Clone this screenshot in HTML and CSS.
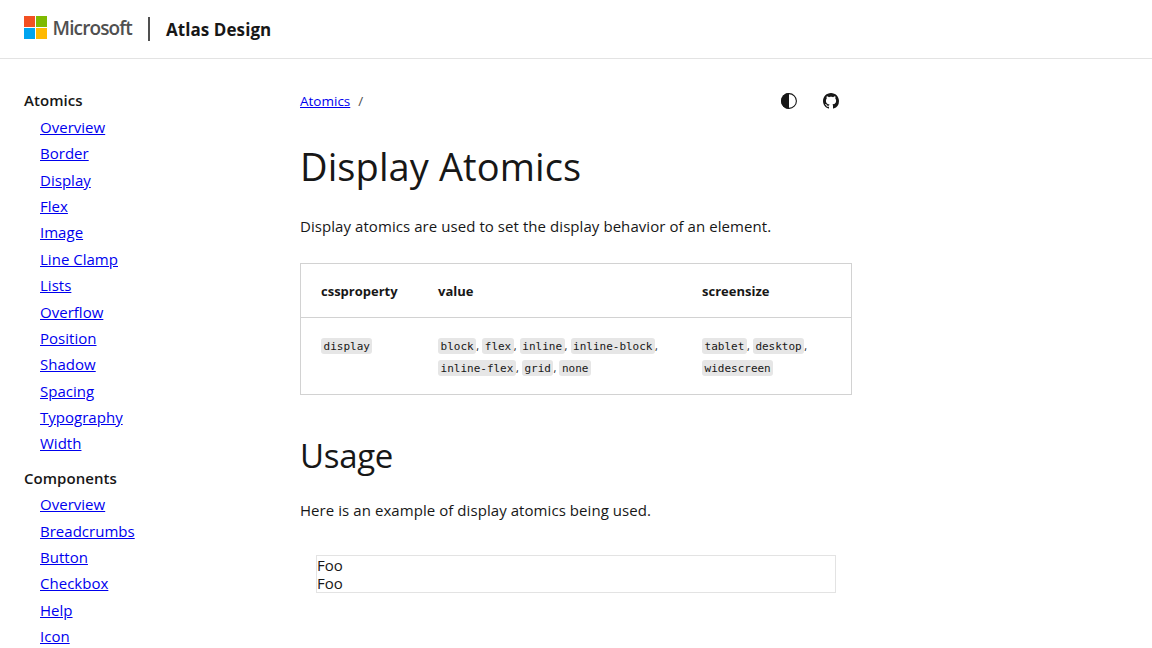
FILE: index.html
```html
<!DOCTYPE html>
<html lang="en">
<head>
<meta charset="utf-8">
<title>Display Atomics - Atlas Design</title>
<link rel="stylesheet" href="styles.css">
</head>
<body>
<header class="header">
  <a class="brand">
    <svg class="brand-mark" viewBox="0 0 23 23" width="23" height="23" aria-hidden="true"><path fill="#f25022" d="M0 0h11v11H0z"/><path fill="#7fba00" d="M12 0h11v11H12z"/><path fill="#00a4ef" d="M0 12h11v11H0z"/><path fill="#ffb900" d="M12 12h11v11H12z"/></svg>
    <span class="brand-name">Microsoft</span>
  </a>
  <span class="divider"></span>
  <span class="site-name">Atlas Design</span>
</header>
<div class="layout">
  <nav class="sidebar">
    <h2 class="nav-title">Atomics</h2>
    <ul class="nav-list">
      <li><a href="#">Overview</a></li>
      <li><a href="#">Border</a></li>
      <li><a href="#">Display</a></li>
      <li><a href="#">Flex</a></li>
      <li><a href="#">Image</a></li>
      <li><a href="#">Line Clamp</a></li>
      <li><a href="#">Lists</a></li>
      <li><a href="#">Overflow</a></li>
      <li><a href="#">Position</a></li>
      <li><a href="#">Shadow</a></li>
      <li><a href="#">Spacing</a></li>
      <li><a href="#">Typography</a></li>
      <li><a href="#">Width</a></li>
    </ul>
    <h2 class="nav-title">Components</h2>
    <ul class="nav-list">
      <li><a href="#">Overview</a></li>
      <li><a href="#">Breadcrumbs</a></li>
      <li><a href="#">Button</a></li>
      <li><a href="#">Checkbox</a></li>
      <li><a href="#">Help</a></li>
      <li><a href="#">Icon</a></li>
    </ul>
  </nav>
  <main class="content">
    <div class="toolbar">
      <div class="breadcrumbs"><a href="#">Atomics</a><span class="slash">/</span></div>
      <div class="actions">
        <svg viewBox="0 0 16 16" width="16" height="16"><circle cx="8" cy="8" r="7.4" fill="none" stroke="#171717" stroke-width="1.1"/><path fill="#171717" d="M8 0a8 8 0 0 0 0 16z"/></svg>
        <svg viewBox="0 0 16 16" width="16" height="16"><path fill="#171717" d="M8 0C3.58 0 0 3.58 0 8c0 3.54 2.29 6.53 5.47 7.59.4.07.55-.17.55-.38 0-.19-.01-.82-.01-1.49-2.01.37-2.53-.49-2.69-.94-.09-.23-.48-.94-.82-1.13-.28-.15-.68-.52-.01-.53.63-.01 1.08.58 1.23.82.72 1.21 1.87.87 2.33.66.07-.52.28-.87.51-1.07-1.78-.2-3.64-.89-3.64-3.95 0-.87.31-1.59.82-2.15-.08-.2-.36-1.02.08-2.12 0 0 .67-.21 2.2.82.64-.18 1.32-.27 2-.27s1.36.09 2 .27c1.53-1.04 2.2-.82 2.2-.82.44 1.1.16 1.92.08 2.12.51.56.82 1.27.82 2.15 0 3.07-1.87 3.75-3.65 3.95.29.25.54.73.54 1.48 0 1.07-.01 1.93-.01 2.2 0 .21.15.46.55.38A8.01 8.01 0 0 0 16 8c0-4.42-3.58-8-8-8z"/></svg>
      </div>
    </div>
    <h1 class="title">Display Atomics</h1>
    <p class="text intro">Display atomics are used to set the display behavior of an element.</p>
    <table class="table">
      <colgroup><col class="col-property"><col class="col-value"><col class="col-screen"></colgroup>
      <thead><tr><th>cssproperty</th><th>value</th><th>screensize</th></tr></thead>
      <tbody><tr>
        <td><code>display</code></td>
        <td><code>block</code>, <code>flex</code>, <code>inline</code>, <code>inline-block</code>,<br><code>inline-flex</code>, <code>grid</code>, <code>none</code></td>
        <td><code>tablet</code>, <code>desktop</code>,<br><code>widescreen</code></td>
      </tr></tbody>
    </table>
    <h2 class="subtitle">Usage</h2>
    <p class="text usage">Here is an example of display atomics being used.</p>
    <div class="example"><div>Foo</div><div>Foo</div></div>
  </main>
</div>
</body>
</html>
```
FILE: styles.css
```css
* { box-sizing: border-box; }
html { overflow: hidden; }
body { margin: 0; height: 648px; overflow: hidden; background: #fff; color: #171717; font: 400 15px/18px "Open Sans", "Noto Sans", sans-serif; letter-spacing: 0.02px; }
h1, h2, p, ul { margin: 0; padding: 0; font-weight: 400; }
a { color: #0000ee; }

.header { display: flex; align-items: flex-start; height: 59px; padding: 16px 24px 0; border-bottom: 1px solid #e3e3e3; }
.brand { display: flex; gap: 5.5px; width: 108px; }
.brand-name { color: #505050; font-size: 19px; line-height: 24px; font-weight: 600; letter-spacing: -0.87px; white-space: nowrap; }
.divider { width: 2px; height: 24px; margin: 1px 16px 0; background: #505050; }
.site-name { font-size: 17px; line-height: 24px; font-weight: 700; letter-spacing: 0.07px; padding-top: 2px; }

.layout { display: grid; grid-template-columns: 276px 552px; padding-left: 24px; }
.sidebar { padding-top: 29px; }
.nav-title { height: 26px; font-size: 15px; line-height: 25px; font-weight: 600; letter-spacing: 0.05px; }
.nav-list { list-style: none; padding-left: 16px; margin-bottom: 8.7px; }
.nav-list li { height: 26.37px; line-height: 27px; }
.nav-list + .nav-title { line-height: 27px; }

.toolbar { display: flex; justify-content: space-between; height: 20px; margin-top: 32px; padding-right: 13px; }
.breadcrumbs { font-size: 13.5px; line-height: 20px; letter-spacing: 0; }
.slash { margin-left: 8px; color: #505050; }
.actions { display: flex; gap: 26px; padding-top: 2px; }
.title { margin-top: 30px; font-size: 38px; line-height: 50px; letter-spacing: 0.1px; }
.text { line-height: 24px; letter-spacing: 0.065px; }
.intro { margin-top: 23px; }
.table { width: 552px; margin-top: 25px; table-layout: fixed; border-collapse: collapse; border: 1px solid #d2d2d2; }
.col-property { width: 117px; }
.col-value { width: 264px; }
.table th { height: 54px; padding: 0 20px; text-align: left; font-size: 13px; font-weight: 700; letter-spacing: 0; border-bottom: 1px solid #d2d2d2; }
.table td { height: 77px; padding: 17px 0 0 20px; vertical-align: top; font-size: 11px; line-height: 22px; letter-spacing: 0; word-spacing: 0.2px; white-space: nowrap; }
.table th + th, .table td + td { padding-left: 20.5px; }
code { display: inline-block; height: 16px; padding: 0 2.6px; border-radius: 3px; background: #e6e6e6; font: 11px/17px "DejaVu Sans Mono", monospace; letter-spacing: -0.01px; }
.subtitle { margin-top: 39px; font-size: 33px; line-height: 44px; letter-spacing: -0.3px; }
.usage { margin-top: 20px; }
.example { margin: 33px 16px 0; border: 1px solid #e3e3e3; }
```
